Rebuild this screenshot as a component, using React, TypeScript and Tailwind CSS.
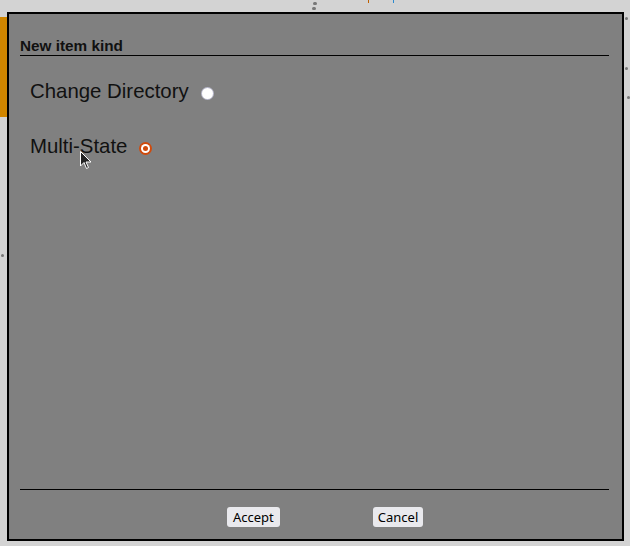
import React, { useState } from 'react';

type Kind = 'cd' | 'multi';

function Radio({ checked }: { checked: boolean }) {
  if (checked) {
    return (
      <span className="flex h-[13px] w-[13px] items-center justify-center rounded-full bg-[#cf4a0c]">
        <span className="flex h-[9px] w-[9px] items-center justify-center rounded-full bg-white">
          <span className="h-[5px] w-[5px] rounded-full bg-[#cf4a0c]" />
        </span>
      </span>
    );
  }
  return (
    <span className="flex h-[13px] w-[13px] items-center justify-center rounded-full bg-[#b9b9cc]">
      <span className="h-[11px] w-[11px] rounded-full bg-white" />
    </span>
  );
}

function Option({ label, checked, onSelect }: { label: string; checked: boolean; onSelect: () => void }) {
  return (
    <label onClick={onSelect} className="flex h-[23px] cursor-default items-center gap-[12px] text-[20.4px] leading-[23px] text-[#111]">
      <span>{label}</span>
      <span className="mt-[3px]">
        <Radio checked={checked} />
      </span>
    </label>
  );
}

export default function App() {
  const [kind, setKind] = useState<Kind>('multi');

  return (
    <div className="relative h-[546px] w-[630px] overflow-hidden bg-[#d3d3d3] font-['Liberation_Sans',Arial,sans-serif]">
      {/* bits of the page behind the dialog */}
      <div className="absolute left-0 top-[17px] h-[100px] w-[7px] bg-[#d08600]" />
      <span className="absolute left-[313px] top-[2px] h-[3px] w-[4px] rounded-full bg-[#777]" />
      <span className="absolute left-[312px] top-[7px] h-[3px] w-[4px] rounded-full bg-[#777]" />
      <span className="absolute left-[368px] top-0 h-[3px] w-[1px] bg-[#c06000]" />
      <span className="absolute left-[393px] top-0 h-[3px] w-[1px] bg-[#2a8ad0]" />
      <span className="absolute left-[625px] top-[17px] h-[3px] w-[3px] rounded-full bg-[#777]" />
      <span className="absolute left-[625px] top-[67px] h-[3px] w-[3px] rounded-full bg-[#777]" />
      <span className="absolute left-[627px] top-[96px] h-[3px] w-[3px] rounded-full bg-[#777]" />
      <span className="absolute left-[1px] top-[254px] h-[3px] w-[3px] rounded-full bg-[#777]" />

      <div className="absolute left-[7px] top-[12px] flex h-[529px] w-[617px] flex-col border-2 border-black bg-[#808080] px-[11px]">
        <div className="mt-[23px] mr-[2px] border-b border-black pb-[1px] text-[15.3px] font-bold leading-[17px] text-[#111]">
          New item kind
        </div>

        <div className="flex flex-col gap-[32px] pl-[10px] pt-[24px]">
          <Option label="Change Directory" checked={kind === 'cd'} onSelect={() => setKind('cd')} />
          <Option label="Multi-State" checked={kind === 'multi'} onSelect={() => setKind('multi')} />
        </div>

        <div className="flex-1" />

        <div className="mr-[2px] flex border-t border-black pb-[12px] pl-[207px] pt-[17px] font-['Noto_Sans',sans-serif]">
          <button className="h-[20px] rounded-[3px] bg-[#e9e9ed] px-[6px] text-[13px] leading-[20px] text-black">
            Accept
          </button>
          <button className="ml-[93px] h-[20px] rounded-[3px] bg-[#e9e9ed] px-[5px] text-[13px] leading-[20px] text-black">
            Cancel
          </button>
        </div>
      </div>

      {/* mouse pointer */}
      <svg className="absolute left-[80px] top-[151px]" width="12" height="19" viewBox="0 0 12 19">
        <path d="M0.5 0.5 L0.5 15 L4 11.5 L6.5 17.5 L8.5 16.5 L6 11 L11 11 Z" fill="#222" stroke="#fff" strokeWidth="1" />
      </svg>
    </div>
  );
}
